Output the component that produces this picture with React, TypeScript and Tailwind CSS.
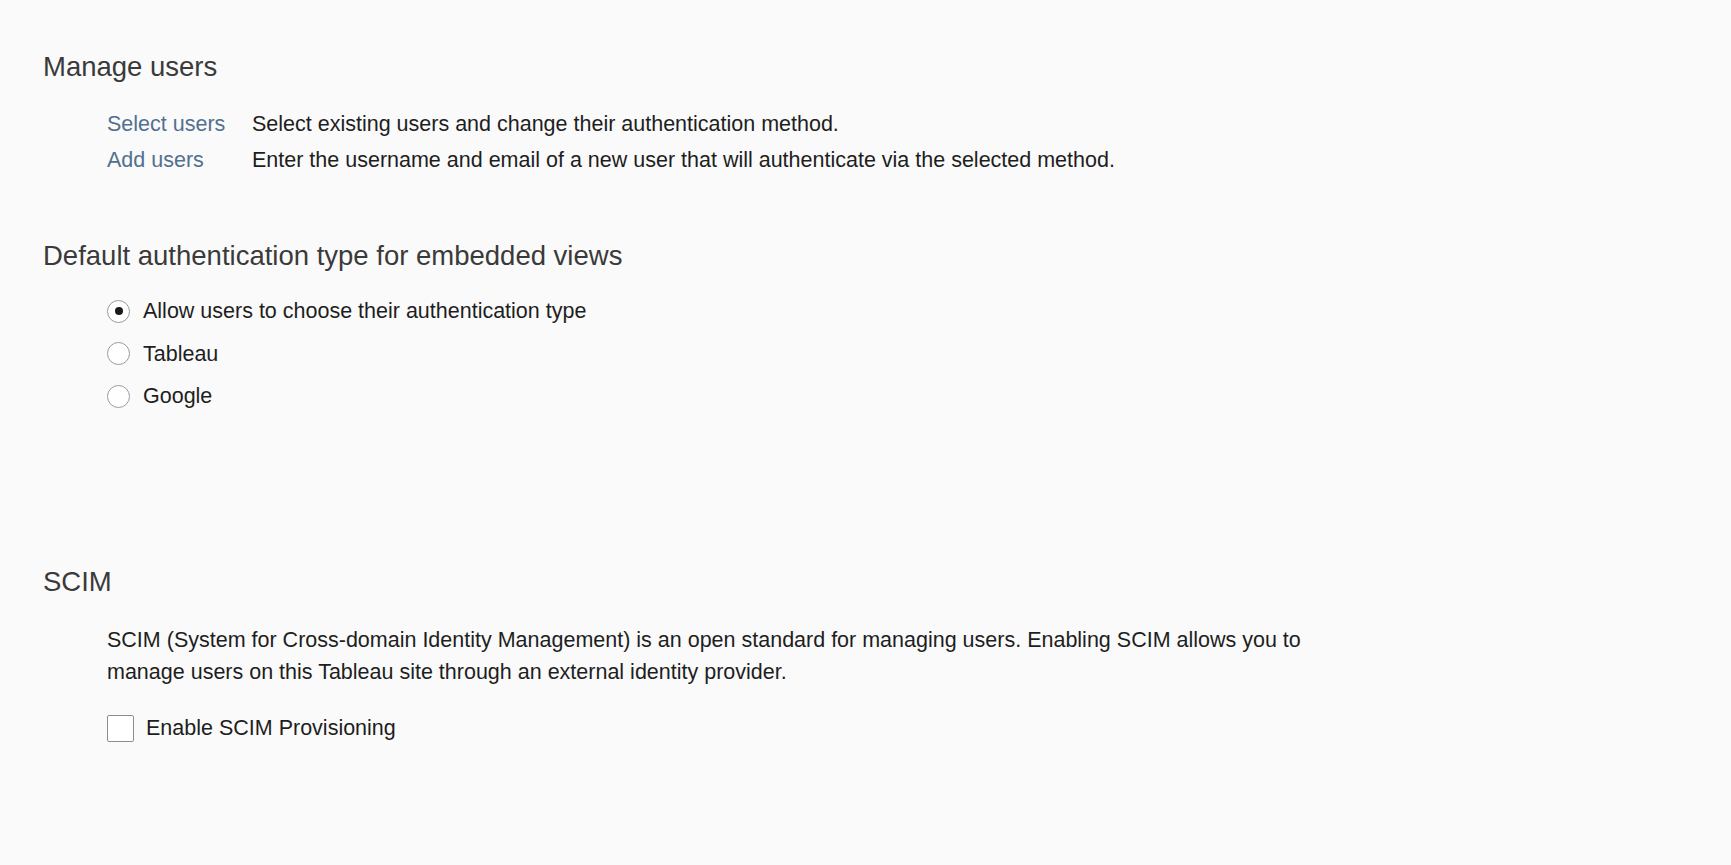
import { useState } from 'react';

const font = { fontFamily: '"Liberation Sans", Arial, sans-serif' };

const Radio = ({ checked, label, onClick }: { checked: boolean; label: string; onClick: () => void }) => (
    <div className="flex items-center h-[42.5px] cursor-pointer" onClick={onClick}>
        <div className="w-[23px] h-[23px] rounded-full border-[1.5px] border-[#9a9a9a] bg-white flex items-center justify-center">
            {checked && <div className="w-[8px] h-[8px] rounded-full bg-[#1a1a1a]" />}
        </div>
        <span className="ml-[13px] leading-[42.5px]">{label}</span>
    </div>
);

const App = () => {
    const [authType, setAuthType] = useState('choose');
    const [scim, setScim] = useState(false);

    return (
        <div className="min-h-screen w-full bg-[#fafafa] text-[21.5px] text-[#1e1e1e] pl-[43px] pt-[51px]" style={font}>
            {/* Manage users */}
            <h2 className="text-[27.5px] leading-[32px] text-[#3a3a3a] font-normal">Manage users</h2>
            <div className="ml-[64px] mt-[23px]">
                <div className="flex leading-[36px]">
                    <a className="w-[145px] text-[#52708f] cursor-pointer">Select users</a>
                    <span>Select existing users and change their authentication method.</span>
                </div>
                <div className="flex leading-[36px]">
                    <a className="w-[145px] text-[#52708f] cursor-pointer">Add users</a>
                    <span>Enter the username and email of a new user that will authenticate via the selected method.</span>
                </div>
            </div>

            {/* Default auth type */}
            <h2 className="mt-[62px] text-[27.5px] leading-[32px] text-[#3a3a3a] font-normal">Default authentication type for embedded views</h2>
            <div className="ml-[64px] mt-[18px]">
                <Radio checked={authType === 'choose'} label="Allow users to choose their authentication type" onClick={() => setAuthType('choose')} />
                <Radio checked={authType === 'tableau'} label="Tableau" onClick={() => setAuthType('tableau')} />
                <Radio checked={authType === 'google'} label="Google" onClick={() => setAuthType('google')} />
            </div>

            {/* SCIM */}
            <h2 className="mt-[148px] text-[27.5px] leading-[32px] text-[#3a3a3a] font-normal">SCIM</h2>
            <div className="ml-[64px] mt-[26px]">
                <p className="w-[1230px] leading-[32px]">
                    SCIM (System for Cross-domain Identity Management) is an open standard for managing users. Enabling SCIM allows you to manage users on this Tableau site through an external identity provider.
                </p>
                <div className="flex items-center h-[34px] mt-[24px] cursor-pointer" onClick={() => setScim(!scim)}>
                    <div className="w-[27px] h-[27px] border-[1.5px] border-[#8c8c8c] rounded-[2px] bg-white flex items-center justify-center">
                        {scim && <span className="text-[16px] leading-none">✓</span>}
                    </div>
                    <span className="ml-[12px]">Enable SCIM Provisioning</span>
                </div>
            </div>
        </div>
    );
};

export default App;
